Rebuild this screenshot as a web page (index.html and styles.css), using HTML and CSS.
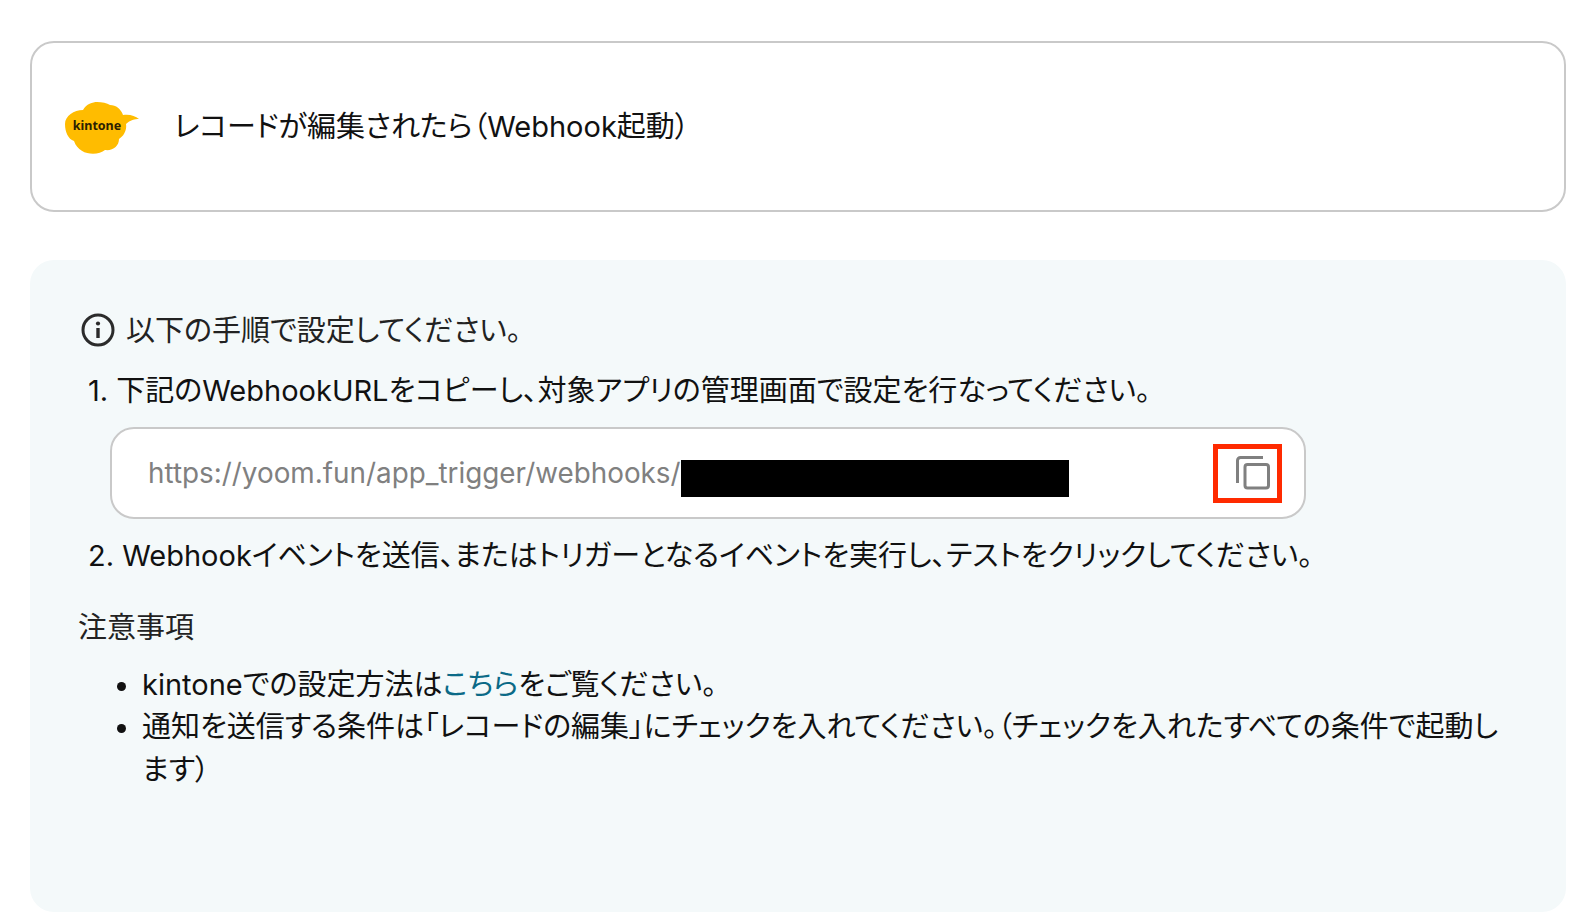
FILE: index.html
```html
<!DOCTYPE html>
<html lang="ja">
<head>
  <meta charset="UTF-8" />
  <title>kintone Webhook</title>
  <link rel="stylesheet" href="styles.css">
</head>
<body>
  <div class="app-card">
    <svg class="logo" viewBox="0 0 74 52" xmlns="http://www.w3.org/2000/svg">
      <path fill="#ffbc00" d="M0 22C0 14 9 8 18 8C21 2 28 0 32 0C37 0 42 1 45 3C51 3 56 7 58 13C65 12 70 14 74 17C70 17 65 18 61 22C62 28 59 34 54 37C54 44 48 49 40 48C33 54 14 54 9 39C3 37 0 30 0 22Z"/>
      <text class="logo-text" x="32" y="28" text-anchor="middle">kintone</text>
    </svg>
    <div class="app-title">レコードが編集されたら（Webhook起動）</div>
  </div>

  <div class="panel">
    <div class="info-head">
      <svg class="info-icon" viewBox="0 0 34 34" xmlns="http://www.w3.org/2000/svg">
        <circle cx="17" cy="17" r="15" fill="none" stroke="#2b2b2b" stroke-width="3"/>
        <circle cx="17" cy="10.5" r="2.1" fill="#2b2b2b"/>
        <rect x="15.3" y="15" width="3.4" height="10" fill="#2b2b2b"/>
      </svg>
      <span>以下の手順で設定してください。</span>
    </div>
    <ol class="steps">
      <li>下記のWebhookURLをコピーし、対象アプリの管理画面で設定を行なってください。</li>
    </ol>
    <div class="url-box">
      <span class="url-text">https://yoom.fun/app_trigger/webhooks/</span>
      <span class="redacted"></span>
      <span class="copy-btn">
        <svg viewBox="0 0 34 34" xmlns="http://www.w3.org/2000/svg">
          <path d="M1.5 27V4.5a3 3 0 0 1 3-3H27" fill="none" stroke="#808080" stroke-width="3"/>
          <rect x="9" y="8.5" width="23.5" height="23.5" rx="2.5" fill="none" stroke="#808080" stroke-width="3"/>
        </svg>
      </span>
    </div>
    <ol class="steps" start="2">
      <li>Webhookイベントを送信、またはトリガーとなるイベントを実行し、テストをクリックしてください。</li>
    </ol>
    <div class="note-title">注意事項</div>
    <ul class="notes">
      <li>kintoneでの設定方法は<a href="#">こちら</a>をご覧ください。</li>
      <li>通知を送信する条件は「レコードの編集」にチェックを入れてください。（チェックを入れたすべての条件で起動します）</li>
    </ul>
  </div>
</body>
</html>
```

FILE: styles.css
```css
html, body {
  margin: 0;
  padding: 0;
  background: #fff;
  height: 100%;
  overflow: hidden;
}
body {
  padding: 41px 14px 0 30px;
  box-sizing: border-box;
  font-family: Inter, 'Noto Sans CJK JP', sans-serif;
  font-size: 29px;
  color: #222;
  font-feature-settings: "palt";
}
.app-card {
  height: 171px;
  box-sizing: border-box;
  border: 2px solid #c9c9c9;
  border-radius: 24px;
  display: flex;
  align-items: center;
  padding-left: 33px;
  margin-bottom: 48px;
}
.logo {
  width: 74px;
  height: 52px;
  margin-top: 2px;
  margin-right: 35px;
}
.logo-text {
  font-family: 'Noto Sans', sans-serif;
  font-size: 12.5px;
  font-weight: 700;
  fill: #2b2100;
}
.app-title {
  color: #111;
  padding-bottom: 6px;
}
.panel {
  height: 652px;
  box-sizing: border-box;
  background: #f4f9fa;
  border-radius: 24px;
  padding: 46px 48px 0 49px;
}
.info-head {
  display: flex;
  align-items: center;
  gap: 11px;
  height: 48px;
  padding-left: 2px;
  margin-bottom: 16px;
}
.info-head span {
  padding-bottom: 5px;
}
.info-icon {
  width: 34px;
  height: 34px;
}
.steps {
  margin: 0;
  padding-left: 9px;
  line-height: 42px;
  color: #111;
  list-style-position: inside;
}
.steps li::marker {
  font-variant-numeric: normal;
}
.url-box {
  margin: 15px 0 16px 31px;
  width: 1196px;
  height: 92px;
  box-sizing: border-box;
  background: #fff;
  border: 2px solid #c9c9c9;
  border-radius: 24px;
  display: flex;
  align-items: center;
  padding-left: 36px;
  color: #808080;
}
.url-text {
  font-size: 27.85px;
}
.redacted {
  display: block;
  width: 388px;
  height: 37px;
  background: #000;
  margin-top: 11px;
}
.copy-btn {
  margin-left: auto;
  margin-right: 22px;
  width: 69px;
  height: 59px;
  box-sizing: border-box;
  border: 5px solid #ff2a00;
  padding-left: 18px;
  display: flex;
  align-items: center;
}
.copy-btn svg {
  width: 34px;
  height: 34px;
}
.note-title {
  margin-top: 30px;
  margin-left: -1px;
  line-height: 42px;
}
.notes {
  margin: 15px 0 0;
  padding-left: 63px;
  line-height: 42.4px;
  color: #111;
}
.notes a {
  color: #0b6a87;
  text-decoration: none;
}
```
